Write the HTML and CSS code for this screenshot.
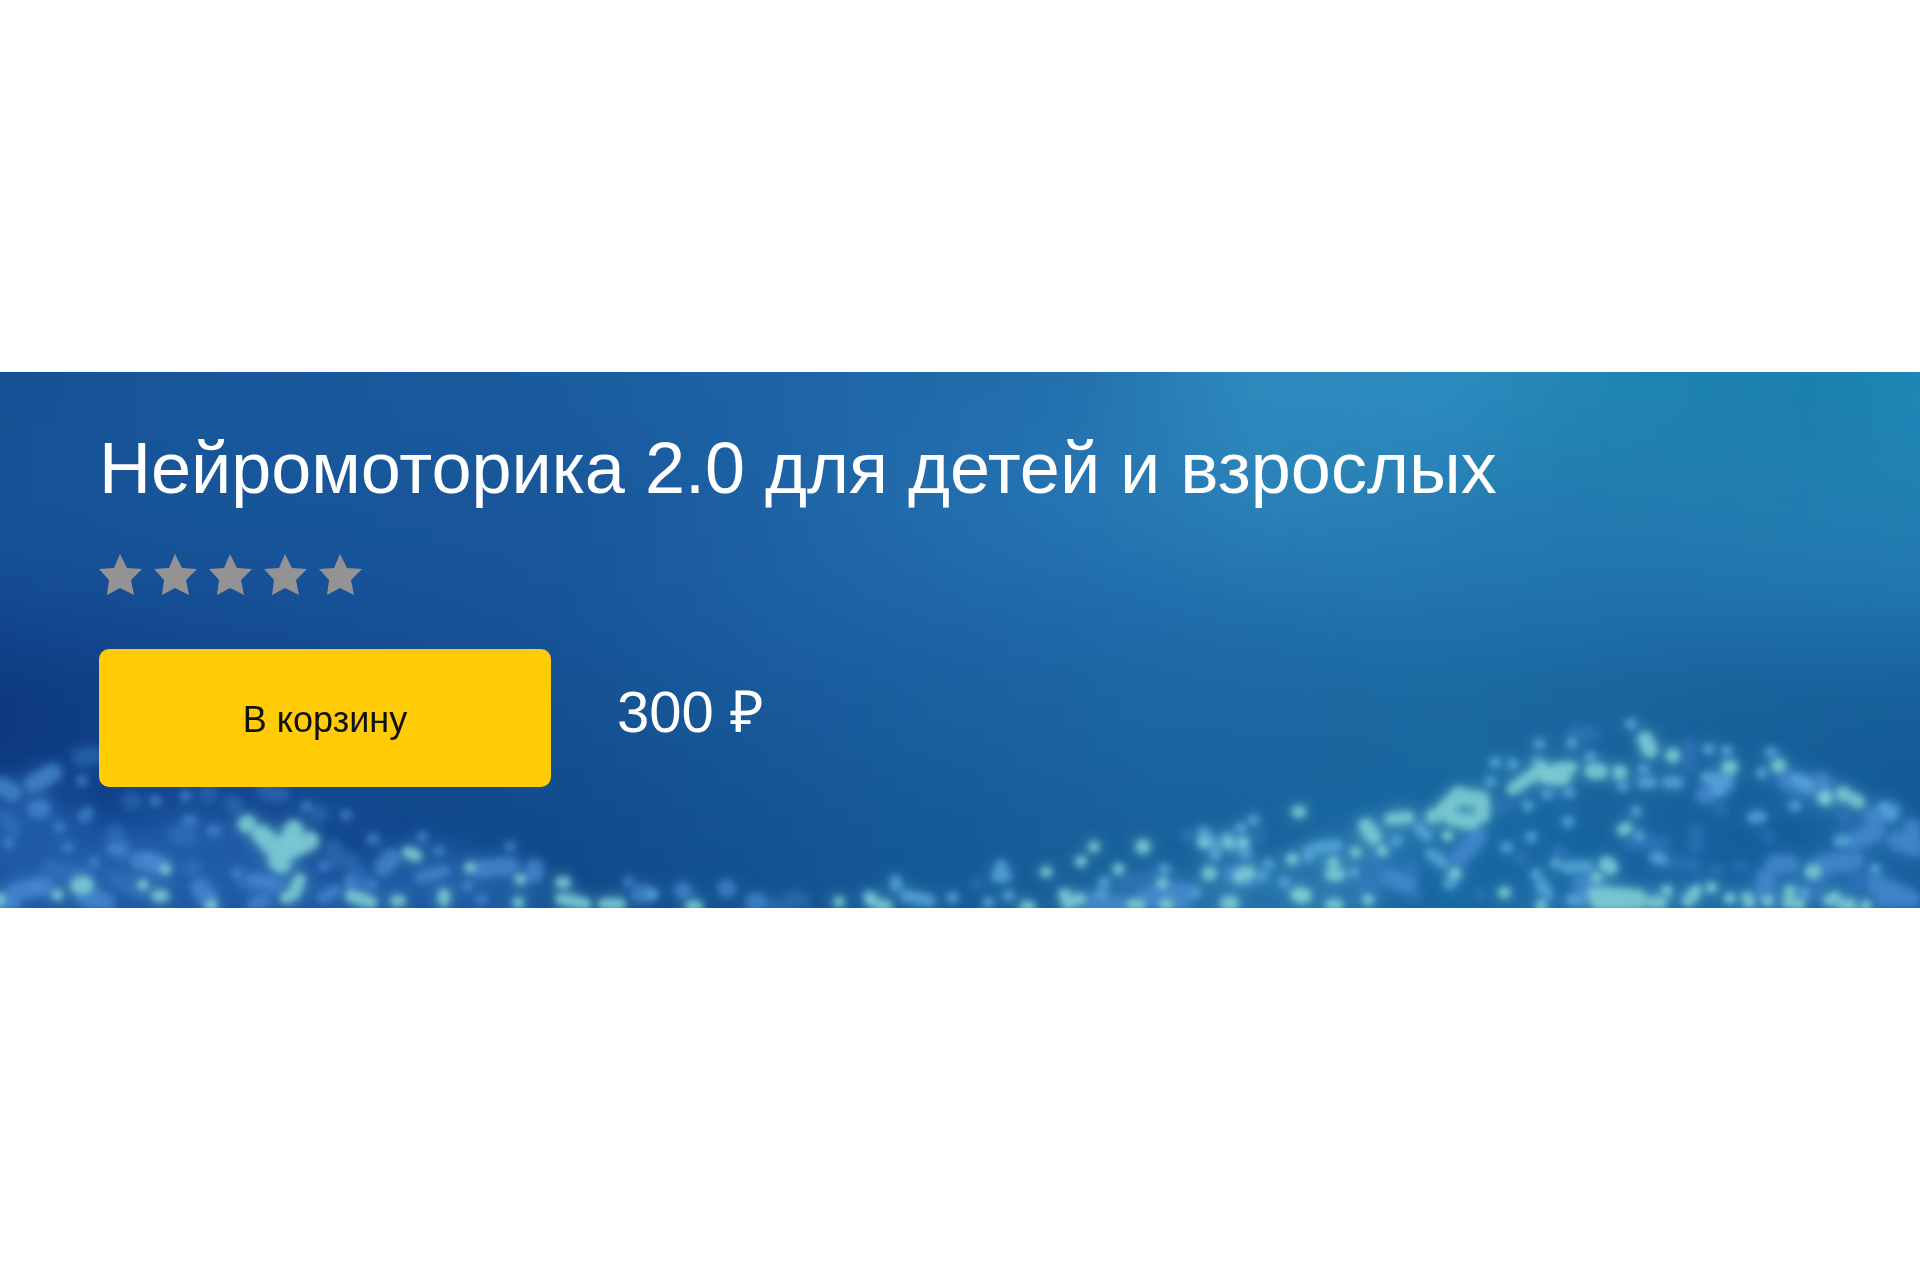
FILE: index.html
```html
<!DOCTYPE html>
<html lang="ru">
<head>
<meta charset="utf-8">
<meta name="viewport" content="width=device-width, initial-scale=1">
<title>Нейромоторика 2.0 для детей и взрослых</title>
<link rel="stylesheet" href="styles.css">
</head>
<body>
<main class="page">
  <section class="banner">
    <svg class="banner__art" viewBox="0 0 1920 535" preserveAspectRatio="none" aria-hidden="true">
      <defs>
        <linearGradient id="r1"><stop offset="0" stop-color="#164f93"/><stop offset=".12" stop-color="#18569a"/><stop offset=".3" stop-color="#195c9f"/><stop offset=".45" stop-color="#1f67a9"/><stop offset=".56" stop-color="#2371ae"/><stop offset=".64" stop-color="#2d89bd"/><stop offset=".73" stop-color="#2d8dc0"/><stop offset=".82" stop-color="#1f85b4"/><stop offset=".92" stop-color="#1b80ad"/><stop offset="1" stop-color="#1f8abb"/></linearGradient>
        <linearGradient id="r2"><stop offset="0" stop-color="#175296"/><stop offset=".12" stop-color="#17569a"/><stop offset=".3" stop-color="#185699"/><stop offset=".4" stop-color="#1d61a4"/><stop offset=".52" stop-color="#2572b1"/><stop offset=".65" stop-color="#2b82b9"/><stop offset=".8" stop-color="#237bb0"/><stop offset="1" stop-color="#2281b3"/></linearGradient>
        <linearGradient id="r3"><stop offset="0" stop-color="#134a91"/><stop offset=".13" stop-color="#174f96"/><stop offset=".3" stop-color="#18559a"/><stop offset=".42" stop-color="#1e62a6"/><stop offset=".55" stop-color="#1f69a9"/><stop offset=".7" stop-color="#2274ae"/><stop offset=".85" stop-color="#2172ab"/><stop offset="1" stop-color="#2277b0"/></linearGradient>
        <linearGradient id="r4"><stop offset="0" stop-color="#0b3379"/><stop offset=".12" stop-color="#104287"/><stop offset=".3" stop-color="#145091"/><stop offset=".45" stop-color="#195c9d"/><stop offset=".6" stop-color="#1c67a2"/><stop offset=".75" stop-color="#1a689f"/><stop offset=".88" stop-color="#176099"/><stop offset="1" stop-color="#145c98"/></linearGradient>
        <linearGradient id="r5"><stop offset="0" stop-color="#124690"/><stop offset=".15" stop-color="#124690"/><stop offset=".3" stop-color="#104a8b"/><stop offset=".45" stop-color="#145695"/><stop offset=".6" stop-color="#17619b"/><stop offset=".75" stop-color="#1768a2"/><stop offset=".9" stop-color="#145e9b"/><stop offset="1" stop-color="#125797"/></linearGradient>
        <filter id="sky" filterUnits="userSpaceOnUse" x="-100" y="-200" width="2120" height="935" color-interpolation-filters="sRGB"><feGaussianBlur stdDeviation="12 50"/></filter>
        <filter id="haze" filterUnits="userSpaceOnUse" x="-100" y="0" width="2120" height="700" color-interpolation-filters="sRGB"><feGaussianBlur stdDeviation="16"/></filter>
        <filter id="glow" filterUnits="userSpaceOnUse" x="-50" y="200" width="2020" height="400" color-interpolation-filters="sRGB">
          <feGaussianBlur in="SourceGraphic" stdDeviation="8" result="halo"/>
          <feGaussianBlur in="SourceGraphic" stdDeviation="3" result="core"/>
          <feMerge><feMergeNode in="halo"/><feMergeNode in="core"/></feMerge>
        </filter>
      </defs>
      <g filter="url(#sky)">
        <path fill="url(#r1)" d="M-60-200h2040V75H-60z"/>
        <path fill="url(#r2)" d="M-60 75h2040v110H-60z"/>
        <path fill="url(#r3)" d="M-60 185h2040v90H-60z"/>
        <path fill="url(#r4)" d="M-60 275h2040v135H-60z"/>
        <path fill="url(#r5)" d="M-60 410h2040v330H-60z"/>
      </g>

      <!-- soft foam under the sparks -->
      <g filter="url(#haze)">
        <path fill="#2c6fbb" opacity=".5" d="M-20 430L40 410L90 460L180 440L280 450L330 510L400 490L450 475L540 510L580 550H-20z"/>
        <path fill="#3f8fc6" opacity=".35" d="M1060 535L1150 510L1270 490L1360 450L1420 440L1410 490L1370 550H1060z"/>
        <path fill="#3f8bcc" opacity=".3" d="M1500 535L1600 515L1740 520L1800 480L1850 480L1930 550H1500z"/>
        <path fill="#3f8bcc" opacity=".3" d="M1740 390L1830 410L1930 470V510L1840 460z"/>
      </g>

      <g filter="url(#glow)">
        <!-- left crest -->
        <g transform="translate(0 328) scale(.408 .333)">
          <path class="spark spark--blue spark--xl" d="M80 250L130 215M90 325h12M0 255l30 20M0 600l30 5M650 420l50 60M1180 505l70-10M40 570l70-15M210 590l50 15M340 480l50 10M940 500l20-30M1310 500v20M490 560l20 30"/>
          <path class="spark spark--dim spark--xl" d="M10 350l20 30M195 170l40-5M280 395l20 60M430 400l30 10M570 310h5M320 300h5M650 270l40 10M510 280h4M120 500l80 30M280 530l60 40M470 500h5M820 440v40M600 540l60 20M780 340h5M860 480l20 60"/>
          <path class="spark spark--blue spark--m" d="M380 300h1M455 285h1M145 378h1M205 350l10-15M165 440h1M20 425h1M200 240h1M460 360h10M530 390h-10M275 445h20M750 317h1M848 343h1M912 415h6M1035 408h1M1075 450h1M1250 437h1M230 485h1M792 497h1M580 517h1M85 555h1M620 535l60 15M860 540v15M910 550h1M1030 530l60-20M1145 555h1M1540 543h1M1180 595h1M620 610l30-10M790 590l30-20M360 470l20 20"/>
          <path class="spark spark--teal spark--xl" d="M605 370h1M640 400l50 60M720 385l-20 60M760 420l-60 30M195 553h12M680 480l10 10"/>
          <path class="spark spark--teal spark--m" d="M405 505h1M350 552h1M385 585h15M735 535l-15 45M1000 455l20 10M1152 500h1M1275 535h1M1375 545h10M1088 580v20M970 600h10M1270 605h1M515 613h5M1375 595l60 15M1480 610h40M0 595v5M860 585l50 20M140 582h1M700 590h4"/>
        </g>
        <!-- middle dip -->
        <g transform="translate(640 328) scale(.408 .333)">
          <path class="spark spark--blue spark--xl" d="M105 570h1M212 563h1M280 605h10M0 580h10M1240 590l60-20M1330 570v30M1110 605l60 5M1450 520l40 10"/>
          <path class="spark spark--dim spark--l" d="M370 590l30 10M325 615h40M1200 540l60-10M825 545h1M1185 545h1M1520 405h1M1340 407h1"/>
          <path class="spark spark--sky spark--m" d="M30 580h1M627 540v15M885 495v10M875 525h20M765 590h1M650 585l60 15M903 585h1M853 605h1M1472 382h1M1503 358h1M1137 545h1M1130 580h1M1380 395l20 35M1410 430v35M1440 410l10 25M1475 425l10 35M1540 490h1M1525 525h1M1360 575h1M1285 505h1M560 585l10 20"/>
          <path class="spark spark--teal spark--m" d="M487 603h1M565 595h4M590 615h15M1112 438h1M1080 482h1M995 513h1M1172 505h1M1280 547h1M1040 580l10 30M1060 600l20 -5M945 617h10M125 617h15M1285 610h10M1380 425h4M1440 425h1M1478 425h1M1205 612h20"/>
          <path class="spark spark--teal spark--l" d="M1232 438h1M1395 518h1M1470 525l20-8M1440 608h10"/>
        </g>
        <!-- right crest -->
        <g transform="translate(1280 328) scale(.408 .333)">
          <path class="spark spark--dim spark--l" d="M720 95l50 5M545 320h5M860 430l80-5M1020 390v50M950 485l70 10M1130 495h1M1080 330h1M1005 130v70M1070 505h1M230 490v60M320 490v60M190 540l30 40M330 570v20M680 450h5M590 475h4M1195 408h1M1410 540h10M1320 540v40M1380 350h4M490 580h1"/>
          <path class="spark spark--blue spark--xl" d="M1240 240l60 15M1330 240v30M1450 350l50-20M1410 420l50-25M1210 490h40M1330 490l80-10M1190 530v50M1460 550l90 45M1550 380v50M1510 420l50 20M1480 590h60M270 530l40 20M740 550l40 30M1040 285l50-30M440 470l45-60"/>
          <path class="spark spark--sky spark--m" d="M860 70h1M635 130h1M715 128h1M527 185h1M570 190h1M630 185h1M760 170h1M515 243h1M655 280h1M708 275h1M607 315h1M890 205h1M840 255h1M890 245h20M950 245h25M1050 145h1M1095 150h1M1045 230l50 10M1070 265h5M1203 155h1M1180 217h1M1262 315h1M1177 348h1M872 332h1M880 405h1M615 408h1M285 420h1M340 380l20 25M370 460l30 25M430 520l-15 30M705 362h1M555 440h1M627 520h1M640 550l15 30M920 470l15 5M675 487h1M700 500l55-3M715 597h20M90 440l50-5M70 470v-20M1458 505h1M1490 340h1M10 545h1M180 515h1M1370 420h15M1160 350h1M1285 577h1M1480 320l20 20M1265 235l30 20"/>
          <path class="spark spark--teal spark--m" d="M42 333h8M570 265l60-50M640 200l30 30M680 205l35-5M850 382l-10 5M775 530h1M28 475h4M130 485v5M125 522h20M185 455h1M250 450h1M270 355l45-5M410 405h1M428 517h1M548 575h4M40 580h10M125 612h15M215 597h1M948 570h1M1057 560h1M1102 592h1M1145 590l5 15M1250 570v5M1245 605h5M1272 610h1M1345 598h4M1380 612h20M1435 615h1M1405 295l15 10M1335 295h4M640 615h1M1000 600l20-30M1195 600h1M910 605h25M1360 590h1"/>
          <path class="spark spark--teal spark--l" d="M375 347h1M210 375l20 35M400 330l40-50M440 290l55 5M495 310v35M450 360l20 5M410 340l20 15M650 225l45 5M765 212h20M832 215h1M895 115l12 35M962 165h1M1100 200h4M1222 195h1M1380 280h1M1335 290h1M800 490l10 10M1305 513h4M770 580l110 10M780 605l100-3M60 585h-10"/>
        </g>
      </g>
    </svg>

    <div class="product">
      <h1 class="product__title">Нейромоторика 2.0 для детей и взрослых</h1>
      <div class="rating" role="img" aria-label="Рейтинг: 0 из 5">
        <svg class="rating__star" viewBox="0 0 43 41"><path d="M21 0L28 14L43 15L32 26L35 41L21 34L8 41L10 26L0 15L15 14z"/></svg>
        <svg class="rating__star" viewBox="0 0 43 41"><path d="M21 0L28 14L43 15L32 26L35 41L21 34L8 41L10 26L0 15L15 14z"/></svg>
        <svg class="rating__star" viewBox="0 0 43 41"><path d="M21 0L28 14L43 15L32 26L35 41L21 34L8 41L10 26L0 15L15 14z"/></svg>
        <svg class="rating__star" viewBox="0 0 43 41"><path d="M21 0L28 14L43 15L32 26L35 41L21 34L8 41L10 26L0 15L15 14z"/></svg>
        <svg class="rating__star" viewBox="0 0 43 41"><path d="M21 0L28 14L43 15L32 26L35 41L21 34L8 41L10 26L0 15L15 14z"/></svg>
      </div>
      <div class="purchase">
        <button class="purchase__button" type="button">В корзину</button>
        <span class="purchase__price">300 ₽</span>
      </div>
    </div>
  </section>
</main>
</body>
</html>
```
FILE: styles.css
```css
* {
  box-sizing: border-box;
}

body {
  margin: 0;
  background: #fff;
  font-family: "Liberation Sans", Arial, sans-serif;
}

.page {
  display: flex;
  flex-direction: column;
  justify-content: center;
  min-height: 100vh;
}

.banner {
  position: relative;
  overflow: hidden;
  background: #18599c;
  color: #fff;
}

.banner__art {
  position: absolute;
  inset: 0;
  width: 100%;
  height: 100%;
}

.spark {
  fill: none;
  stroke-linecap: round;
  stroke-linejoin: round;
  vector-effect: non-scaling-stroke;
}

.spark--m { stroke-width: 11px; }
.spark--l { stroke-width: 14px; }
.spark--xl { stroke-width: 17px; }

.spark--dim { stroke: #3a7cc4; opacity: 0.35; }
.spark--blue { stroke: #4a8dd2; opacity: 0.6; }
.spark--sky { stroke: #56a5d6; opacity: 0.8; }
.spark--teal { stroke: #7ccbd3; opacity: 0.85; }

.product {
  position: relative;
  padding: 56px 99px 121px;
}

.product__title {
  margin: 0 0 46px;
  font-size: 72px;
  font-weight: 400;
  line-height: 80px;
}

.rating {
  display: flex;
  gap: 12px;
  margin-bottom: 54px;
}

.rating__star {
  width: 43px;
  height: 41px;
  fill: #939393;
}

.purchase {
  display: flex;
  align-items: baseline;
  gap: 66px;
}

.purchase__button {
  width: 452px;
  height: 138px;
  padding: 4px 0 0;
  border: 0;
  border-radius: 10px;
  background: #ffcc05;
  color: #111;
  font: inherit;
  font-size: 36px;
  cursor: pointer;
}

.purchase__price {
  font-size: 58px;
  line-height: 68px;
}
```
